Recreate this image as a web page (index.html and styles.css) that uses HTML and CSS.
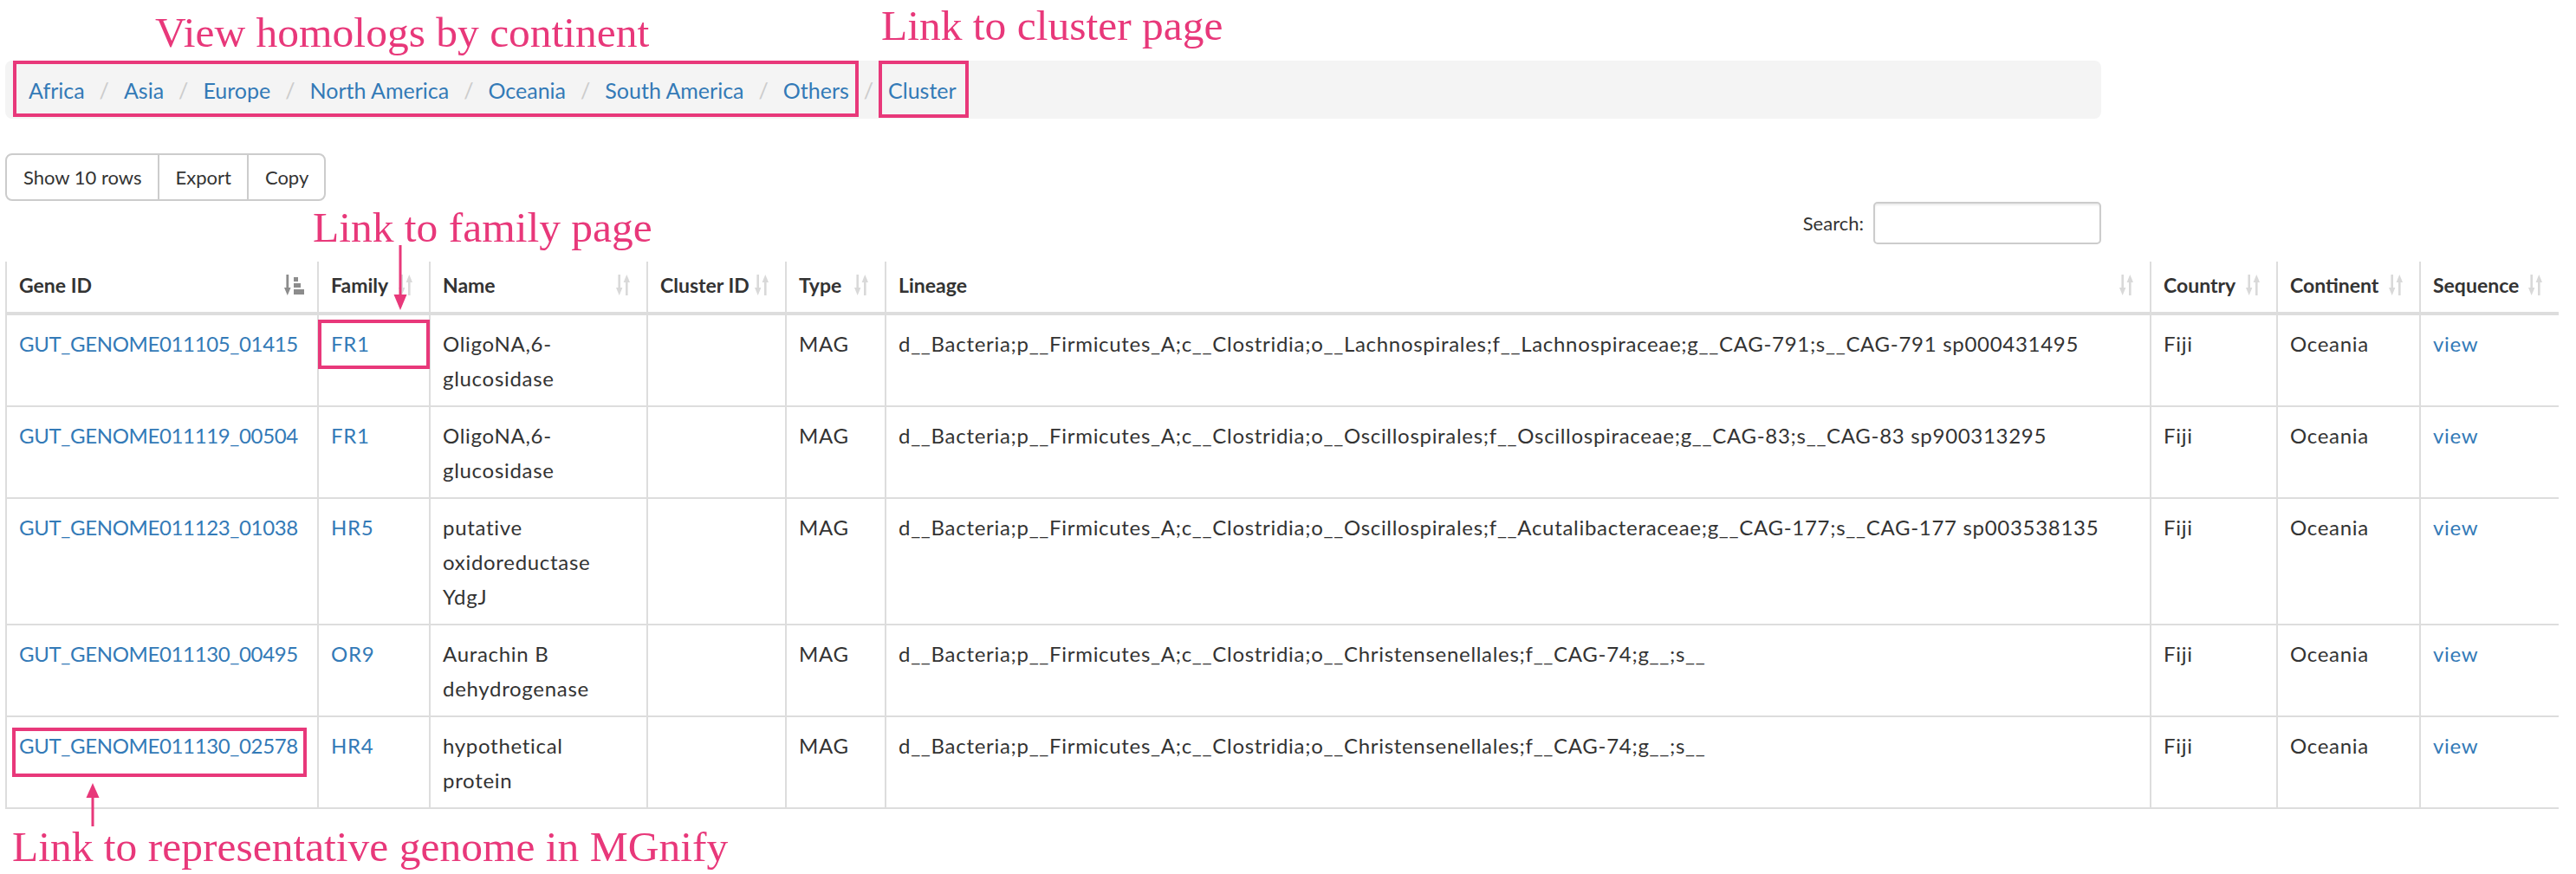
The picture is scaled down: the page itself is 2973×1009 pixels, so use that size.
FILE: index.html
```html
<!DOCTYPE html>
<html lang="en">
<head>
<meta charset="utf-8">
<title>Homologs</title>
<link rel="stylesheet" href="styles.css">
</head>
<body>
<svg class="defs" width="0" height="0" aria-hidden="true">
  <defs>
    <symbol id="ico-sort" viewBox="0 0 16 24">
      <rect x="2.4" y="0" width="2.6" height="17"/>
      <polygon points="0,15 7.4,15 3.7,24"/>
      <polygon points="8.6,9 16,9 12.3,0"/>
      <rect x="11" y="7" width="2.6" height="17"/>
    </symbol>
    <symbol id="ico-asc" viewBox="0 0 23 24">
      <rect x="2.4" y="0" width="2.8" height="17"/>
      <polygon points="0,15 7.6,15 3.8,24"/>
      <rect x="11" y="3" width="5" height="5"/>
      <rect x="11" y="10" width="8" height="5"/>
      <rect x="11" y="17" width="12" height="6"/>
    </symbol>
  </defs>
</svg>

<div class="page">
  <div class="top">
    <nav class="crumbs">
      <a href="#">Africa</a><span class="sep">/</span>
      <a href="#">Asia</a><span class="sep">/</span>
      <a href="#">Europe</a><span class="sep">/</span>
      <a href="#">North America</a><span class="sep">/</span>
      <a href="#">Oceania</a><span class="sep">/</span>
      <a href="#">South America</a><span class="sep">/</span>
      <a href="#">Others</a><span class="sep">/</span>
      <a href="#">Cluster</a>
    </nav>

    <div class="btns">
      <span class="btn">Show 10 rows</span>
      <span class="btn">Export</span>
      <span class="btn">Copy</span>
    </div>

    <div class="filter">
      <label class="filter-label">Search:</label>
      <span class="filter-input"></span>
    </div>
  </div>

  <table class="grid">
    <colgroup>
      <col class="c-gene"><col class="c-fam"><col class="c-name"><col class="c-clu"><col class="c-type"><col class="c-lin"><col class="c-cty"><col class="c-cont"><col class="c-seq">
    </colgroup>
    <thead>
      <tr>
        <th><div class="thc"><span>Gene ID</span><svg class="ico ico-asc"><use href="#ico-asc"/></svg></div></th>
        <th><div class="thc"><span>Family</span><svg class="ico"><use href="#ico-sort"/></svg></div></th>
        <th><div class="thc"><span>Name</span><svg class="ico"><use href="#ico-sort"/></svg></div></th>
        <th><div class="thc"><span>Cluster ID</span><svg class="ico"><use href="#ico-sort"/></svg></div></th>
        <th><div class="thc"><span>Type</span><svg class="ico"><use href="#ico-sort"/></svg></div></th>
        <th><div class="thc"><span>Lineage</span><svg class="ico"><use href="#ico-sort"/></svg></div></th>
        <th><div class="thc"><span>Country</span><svg class="ico"><use href="#ico-sort"/></svg></div></th>
        <th><div class="thc"><span>Continent</span><svg class="ico"><use href="#ico-sort"/></svg></div></th>
        <th><div class="thc"><span>Sequence</span><svg class="ico"><use href="#ico-sort"/></svg></div></th>
      </tr>
    </thead>
    <tbody>
      <tr>
        <td><a class="gene" href="#">GUT_GENOME011105_01415</a></td>
        <td><a href="#">FR1</a></td>
        <td class="name">OligoNA,6-glucosidase</td>
        <td></td>
        <td>MAG</td>
        <td>d__Bacteria;p__Firmicutes_A;c__Clostridia;o__Lachnospirales;f__Lachnospiraceae;g__CAG-791;s__CAG-791 sp000431495</td>
        <td>Fiji</td>
        <td>Oceania</td>
        <td><a href="#">view</a></td>
      </tr>
      <tr>
        <td><a class="gene" href="#">GUT_GENOME011119_00504</a></td>
        <td><a href="#">FR1</a></td>
        <td class="name">OligoNA,6-glucosidase</td>
        <td></td>
        <td>MAG</td>
        <td>d__Bacteria;p__Firmicutes_A;c__Clostridia;o__Oscillospirales;f__Oscillospiraceae;g__CAG-83;s__CAG-83 sp900313295</td>
        <td>Fiji</td>
        <td>Oceania</td>
        <td><a href="#">view</a></td>
      </tr>
      <tr>
        <td><a class="gene" href="#">GUT_GENOME011123_01038</a></td>
        <td><a href="#">HR5</a></td>
        <td class="name">putative oxidoreductase YdgJ</td>
        <td></td>
        <td>MAG</td>
        <td>d__Bacteria;p__Firmicutes_A;c__Clostridia;o__Oscillospirales;f__Acutalibacteraceae;g__CAG-177;s__CAG-177 sp003538135</td>
        <td>Fiji</td>
        <td>Oceania</td>
        <td><a href="#">view</a></td>
      </tr>
      <tr>
        <td><a class="gene" href="#">GUT_GENOME011130_00495</a></td>
        <td><a href="#">OR9</a></td>
        <td class="name">Aurachin B dehydrogenase</td>
        <td></td>
        <td>MAG</td>
        <td>d__Bacteria;p__Firmicutes_A;c__Clostridia;o__Christensenellales;f__CAG-74;g__;s__</td>
        <td>Fiji</td>
        <td>Oceania</td>
        <td><a href="#">view</a></td>
      </tr>
      <tr>
        <td><a class="gene" href="#">GUT_GENOME011130_02578</a></td>
        <td><a href="#">HR4</a></td>
        <td class="name">hypothetical protein</td>
        <td></td>
        <td>MAG</td>
        <td>d__Bacteria;p__Firmicutes_A;c__Clostridia;o__Christensenellales;f__CAG-74;g__;s__</td>
        <td>Fiji</td>
        <td>Oceania</td>
        <td><a href="#">view</a></td>
      </tr>
    </tbody>
  </table>

  <!-- annotation overlay -->
  <div class="note note-continent">View homologs by continent</div>
  <div class="note note-cluster">Link to cluster page</div>
  <div class="note note-family">Link to family page</div>
  <div class="note note-genome">Link to representative genome in MGnify</div>

  <div class="hl hl-continent"></div>
  <div class="hl hl-cluster"></div>
  <div class="hl hl-family"></div>
  <div class="hl hl-genome"></div>

  <svg class="arrow arrow-down" width="16" height="76" viewBox="0 0 16 76">
    <rect x="6.5" y="0" width="3" height="60"/>
    <polygon points="0.5,57 15.5,57 8,75"/>
  </svg>
  <svg class="arrow arrow-up" width="16" height="52" viewBox="0 0 16 52">
    <polygon points="8,1 0.5,18 15.5,18"/>
    <rect x="6.5" y="14" width="3" height="37"/>
  </svg>
</div>
</body>
</html>
```

FILE: styles.css
```css
html, body {
  margin: 0;
  padding: 0;
  background: #ffffff;
}

body {
  font-family: Lato, "Noto Sans", "Open Sans", sans-serif;
  color: #333333;
}

.defs {
  position: absolute;
  width: 0;
  height: 0;
  overflow: hidden;
}

.page {
  position: relative;
  box-sizing: border-box;
  width: 2973px;
  height: 1009px;
  padding: 70px 0 0 6px;
  overflow: hidden;
}

.top {
  width: 2419px;
}

/* breadcrumb */
.crumbs {
  display: flex;
  align-items: center;
  box-sizing: border-box;
  height: 67px;
  padding: 0 0 0 27px;
  background: #f4f4f4;
  border-radius: 8px;
  font-size: 25px;
  line-height: 40px;
}

.crumbs a {
  color: #337ab7;
  text-decoration: none;
}

.sep {
  color: #cccccc;
  padding: 0 17px;
}

/* buttons */
.btns {
  display: flex;
  width: fit-content;
  box-sizing: border-box;
  height: 55px;
  margin-top: 40px;
  border: 2px solid #cccccc;
  border-radius: 8px;
  font-size: 22px;
  color: #333333;
}

.btn {
  display: flex;
  align-items: center;
  padding: 0 18px 0 19px;
}

.btn + .btn {
  border-left: 2px solid #cccccc;
}

/* search */
.filter {
  display: flex;
  justify-content: flex-end;
  align-items: center;
  gap: 11px;
  margin-top: 1px;
  height: 49px;
}

.filter-label {
  font-size: 22px;
  color: #333333;
}

.filter-input {
  display: block;
  box-sizing: border-box;
  width: 263px;
  height: 49px;
  border: 2px solid #cccccc;
  border-radius: 5px;
  box-shadow: inset 0 2px 2px rgba(0, 0, 0, 0.075);
  background: #ffffff;
}

/* table */
.grid {
  margin-top: 20px;
  width: 2947px;
  table-layout: fixed;
  border-collapse: separate;
  border-spacing: 0;
  font-size: 24px;
  line-height: 40px;
}

.c-gene { width: 360px; }
.c-fam { width: 129px; }
.c-name { width: 251px; }
.c-clu { width: 160px; }
.c-type { width: 115px; }
.c-lin { width: 1460px; }
.c-cty { width: 146px; }
.c-cont { width: 165px; }
.c-seq { width: 161px; }

.grid th {
  text-align: left;
  font-weight: 700;
  font-size: 23px;
  padding: 7px 14px 11px 14px;
  border-left: 2px solid #dddddd;
  border-bottom: 4px solid #dddddd;
  vertical-align: bottom;
}

.thc {
  display: flex;
  align-items: center;
  justify-content: space-between;
  white-space: nowrap;
}

.ico {
  flex: none;
  width: 16px;
  height: 24px;
  margin-right: 5px;
  fill: #d9d9d9;
}

.ico-asc {
  width: 23px;
  margin-right: 1px;
  fill: #8c8c8c;
}

.grid td {
  padding: 13px 14px 11px 14px;
  border-left: 2px solid #dddddd;
  vertical-align: top;
  letter-spacing: 0.7px;
  word-wrap: break-word;
}

.grid td.name {
  padding-right: 20px;
}

.grid tbody tr + tr td {
  border-top: 2px solid #dddddd;
}

.grid tbody tr:last-child td {
  border-bottom: 2px solid #dddddd;
}

.grid a {
  color: #337ab7;
  text-decoration: none;
}

.grid a.gene {
  letter-spacing: -0.35px;
}

/* annotation overlay */
.note {
  position: absolute;
  font-family: "Liberation Serif", "Times New Roman", serif;
  font-size: 49.5px;
  line-height: normal;
  color: #e8387a;
  white-space: nowrap;
}

.note-continent { left: 179px; top: 9px; }
.note-cluster { left: 1017px; top: 1px; }
.note-family { left: 361px; top: 234px; }
.note-genome { left: 14px; top: 949px; }

.hl {
  position: absolute;
  box-sizing: border-box;
  border: 4px solid #e8387a;
}

.hl-continent { left: 15px; top: 70px; width: 976px; height: 65px; }
.hl-cluster { left: 1014px; top: 70px; width: 104px; height: 66px; }
.hl-family { left: 367px; top: 369px; width: 129px; height: 57px; }
.hl-genome { left: 14px; top: 840px; width: 340px; height: 57px; }

.arrow {
  position: absolute;
  fill: #e8387a;
}

.arrow-down { left: 454px; top: 283px; }
.arrow-up { left: 99px; top: 903px; }
```
